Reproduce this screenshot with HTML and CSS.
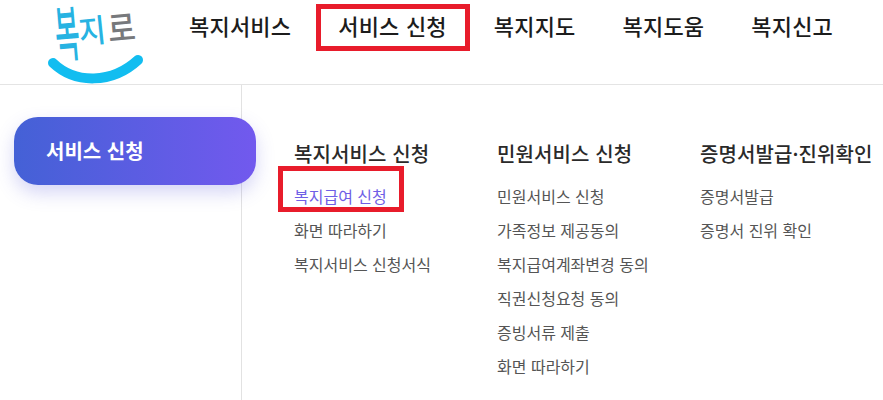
FILE: index.html
```html
<!DOCTYPE html>
<html lang="ko">
<head>
<meta charset="utf-8">
<title>서비스 신청</title>
<link rel="stylesheet" href="styles.css">
</head>
<body>
<header class="header">
  <a class="logo" aria-label="복지로">
    <svg class="logo-svg" width="110" height="84" viewBox="0 0 110 84">
      <text class="logo-bok" transform="translate(17 57) rotate(-5) scale(0.95 2.15)">복</text>
      <text class="logo-ji" transform="translate(40 44) rotate(-6) scale(1.05 1.15)">지</text>
      <text class="logo-ro" transform="translate(69 42) rotate(-5) scale(1 1.15)">로</text>
      <path class="logo-smile" d="M13 63 C35 84 72 84 98 60"/>
    </svg>
  </a>
  <nav class="nav">
    <a class="nav-item">복지서비스</a>
    <a class="nav-item nav-item-marked">서비스 신청</a>
    <a class="nav-item">복지지도</a>
    <a class="nav-item">복지도움</a>
    <a class="nav-item">복지신고</a>
  </nav>
</header>
<main class="main">
  <aside class="side">
    <div class="side-btn">서비스 신청</div>
  </aside>
  <section class="cols">
    <div class="col">
      <h2 class="col-title">복지서비스 신청</h2>
      <ul class="list">
        <li class="list-item list-item-active">복지급여 신청</li>
        <li class="list-item">화면 따라하기</li>
        <li class="list-item">복지서비스 신청서식</li>
      </ul>
    </div>
    <div class="col">
      <h2 class="col-title">민원서비스 신청</h2>
      <ul class="list">
        <li class="list-item">민원서비스 신청</li>
        <li class="list-item">가족정보 제공동의</li>
        <li class="list-item">복지급여계좌변경 동의</li>
        <li class="list-item">직권신청요청 동의</li>
        <li class="list-item">증빙서류 제출</li>
        <li class="list-item">화면 따라하기</li>
      </ul>
    </div>
    <div class="col">
      <h2 class="col-title">증명서발급·진위확인</h2>
      <ul class="list">
        <li class="list-item">증명서발급</li>
        <li class="list-item">증명서 진위 확인</li>
      </ul>
    </div>
  </section>
</main>
</body>
</html>
```
FILE: styles.css
```css
*, *::after { box-sizing: border-box; }
html, body { margin: 0; padding: 0; }
body {
  width: 883px;
  height: 400px;
  overflow: hidden;
  background: #fff;
  font-family: "Noto Sans CJK KR", "Noto Sans", sans-serif;
  color: #222;
}
.header {
  display: flex;
  align-items: flex-start;
  height: 85px;
  border-bottom: 1px solid #e4e4e4;
}
.logo { display: block; flex: none; width: 189px; height: 84px; padding-left: 40px; }
.logo-svg { display: block; overflow: hidden; }
.logo-svg text { font-family: "Noto Sans CJK KR", sans-serif; }
.logo-bok, .logo-ji { fill: #27b3e2; font-size: 28px; font-weight: 500; }
.logo-ro { fill: #77797c; font-size: 30px; font-weight: 500; }
.logo-smile { fill: none; stroke: #12bdf0; stroke-width: 10; stroke-linecap: round; }
.nav { display: flex; gap: 47px; padding-top: 7px; }
.nav-item {
  position: relative;
  font-size: 22px;
  line-height: 36px;
  font-weight: 500;
  letter-spacing: 0.2px;
  color: #1c1c1c;
  white-space: nowrap;
}
.nav-item-marked::after {
  content: "";
  position: absolute;
  left: -22.5px;
  right: -23px;
  top: -3px;
  bottom: -8px;
  border: 5px solid #e81c2b;
}
.main { display: flex; height: 315px; }
.side {
  flex: none;
  width: 242px;
  padding: 32px 0 0 14px;
  border-right: 1px solid #e2e2e2;
}
.side-btn {
  width: 242px;
  height: 68px;
  padding: 20px 0 0 32px;
  border-radius: 24px;
  background: linear-gradient(90deg, #4461d6, #7259ee);
  box-shadow: 0 8px 18px rgba(90, 90, 220, 0.25);
  color: #fff;
  font-size: 20px;
  line-height: 28px;
  font-weight: 700;
  white-space: nowrap;
}
.cols { display: flex; padding: 53px 0 0 52px; }
.col { flex: none; width: 203px; }
.col-title {
  margin: 0 0 9px;
  font-size: 20px;
  line-height: 32px;
  font-weight: 500;
  letter-spacing: 0.1px;
  color: #2a2a2a;
  white-space: nowrap;
}
.list { margin: 0; padding: 0; list-style: none; }
.list-item {
  position: relative;
  height: 34px;
  font-size: 16px;
  line-height: 34px;
  color: #555;
  white-space: nowrap;
}
.list-item-active { color: #6f5fe6; }
.list-item-active::after {
  content: "";
  position: absolute;
  left: -16px;
  top: -13px;
  width: 126px;
  height: 46px;
  border: 5px solid #e81c2b;
}
```
